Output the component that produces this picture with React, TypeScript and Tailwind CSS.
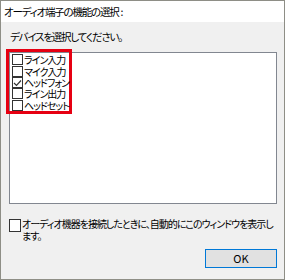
import React from "react";

const devices = [
  { label: "ライン入力", checked: false },
  { label: "マイク入力", checked: false },
  { label: "ヘッドフォン", checked: true },
  { label: "ライン出力", checked: false },
  { label: "ヘッドセット", checked: false },
];

const Box = ({ checked, size }: { checked?: boolean; size: string }) => (
  <span
    className={`${size} shrink-0 border border-[#333333] bg-white flex items-center justify-center`}
  >
    {checked && (
      <svg width="9" height="8" viewBox="0 0 9 8">
        <path d="M1 4 L3.5 6.5 L8 1.5" fill="none" stroke="#333" strokeWidth="1.2" />
      </svg>
    )}
  </span>
);

const App = () => {
  return (
    <div
      className="w-[285px] h-[280px] border border-[#8e8e86] flex flex-col text-[10px] tracking-[-1px] leading-[14px] text-black [font-feature-settings:'palt']"
      style={{ fontFamily: '"Noto Sans CJK JP", "Noto Sans", sans-serif' }}
    >
      <div className="h-[21px] bg-white flex items-center pl-[3px] text-[10.5px] tracking-[-1.2px]">
        <span>オーディオ端子の機能の選択</span>
        <span className="ml-[2px] tracking-normal">:</span>
      </div>
      <div className="flex-1 bg-[#f0f0f0] flex flex-col pl-[8px] pr-[7px]">
        <p className="mt-[8px] pl-[1px] text-[10.5px] tracking-[-1.2px]">デバイスを選択してください。</p>
        <div className="mt-[8px] h-[152px] border border-[#828790] bg-white">
          <div className="-ml-[4px] -mt-[4px] w-[66px] h-[65px] border-[3px] border-[#e60012] pl-[3px] pt-[2px] flex flex-col">
            {devices.map((d) => (
              <div key={d.label} className="h-[11.5px] flex items-center gap-[1px]">
                <Box checked={d.checked} size="w-[11px] h-[11px]" />
                <span className="whitespace-nowrap leading-[11px]">{d.label}</span>
              </div>
            ))}
          </div>
        </div>
        <div className="mt-[14px] flex items-start gap-[1px]">
          <span className="pt-[1px]">
            <Box size="w-[12px] h-[13px]" />
          </span>
          <p className="leading-[12px]">
            オーディオ機器を接続したときに、自動的にこのウィンドウを表示します。
          </p>
        </div>
        <div className="mt-auto mb-[11px] flex justify-end">
          <button className="w-[72px] h-[19px] border border-[#0078d7] bg-[#e1e1e1] text-[11px] tracking-normal leading-none">
            OK
          </button>
        </div>
      </div>
    </div>
  );
};

export default App;
